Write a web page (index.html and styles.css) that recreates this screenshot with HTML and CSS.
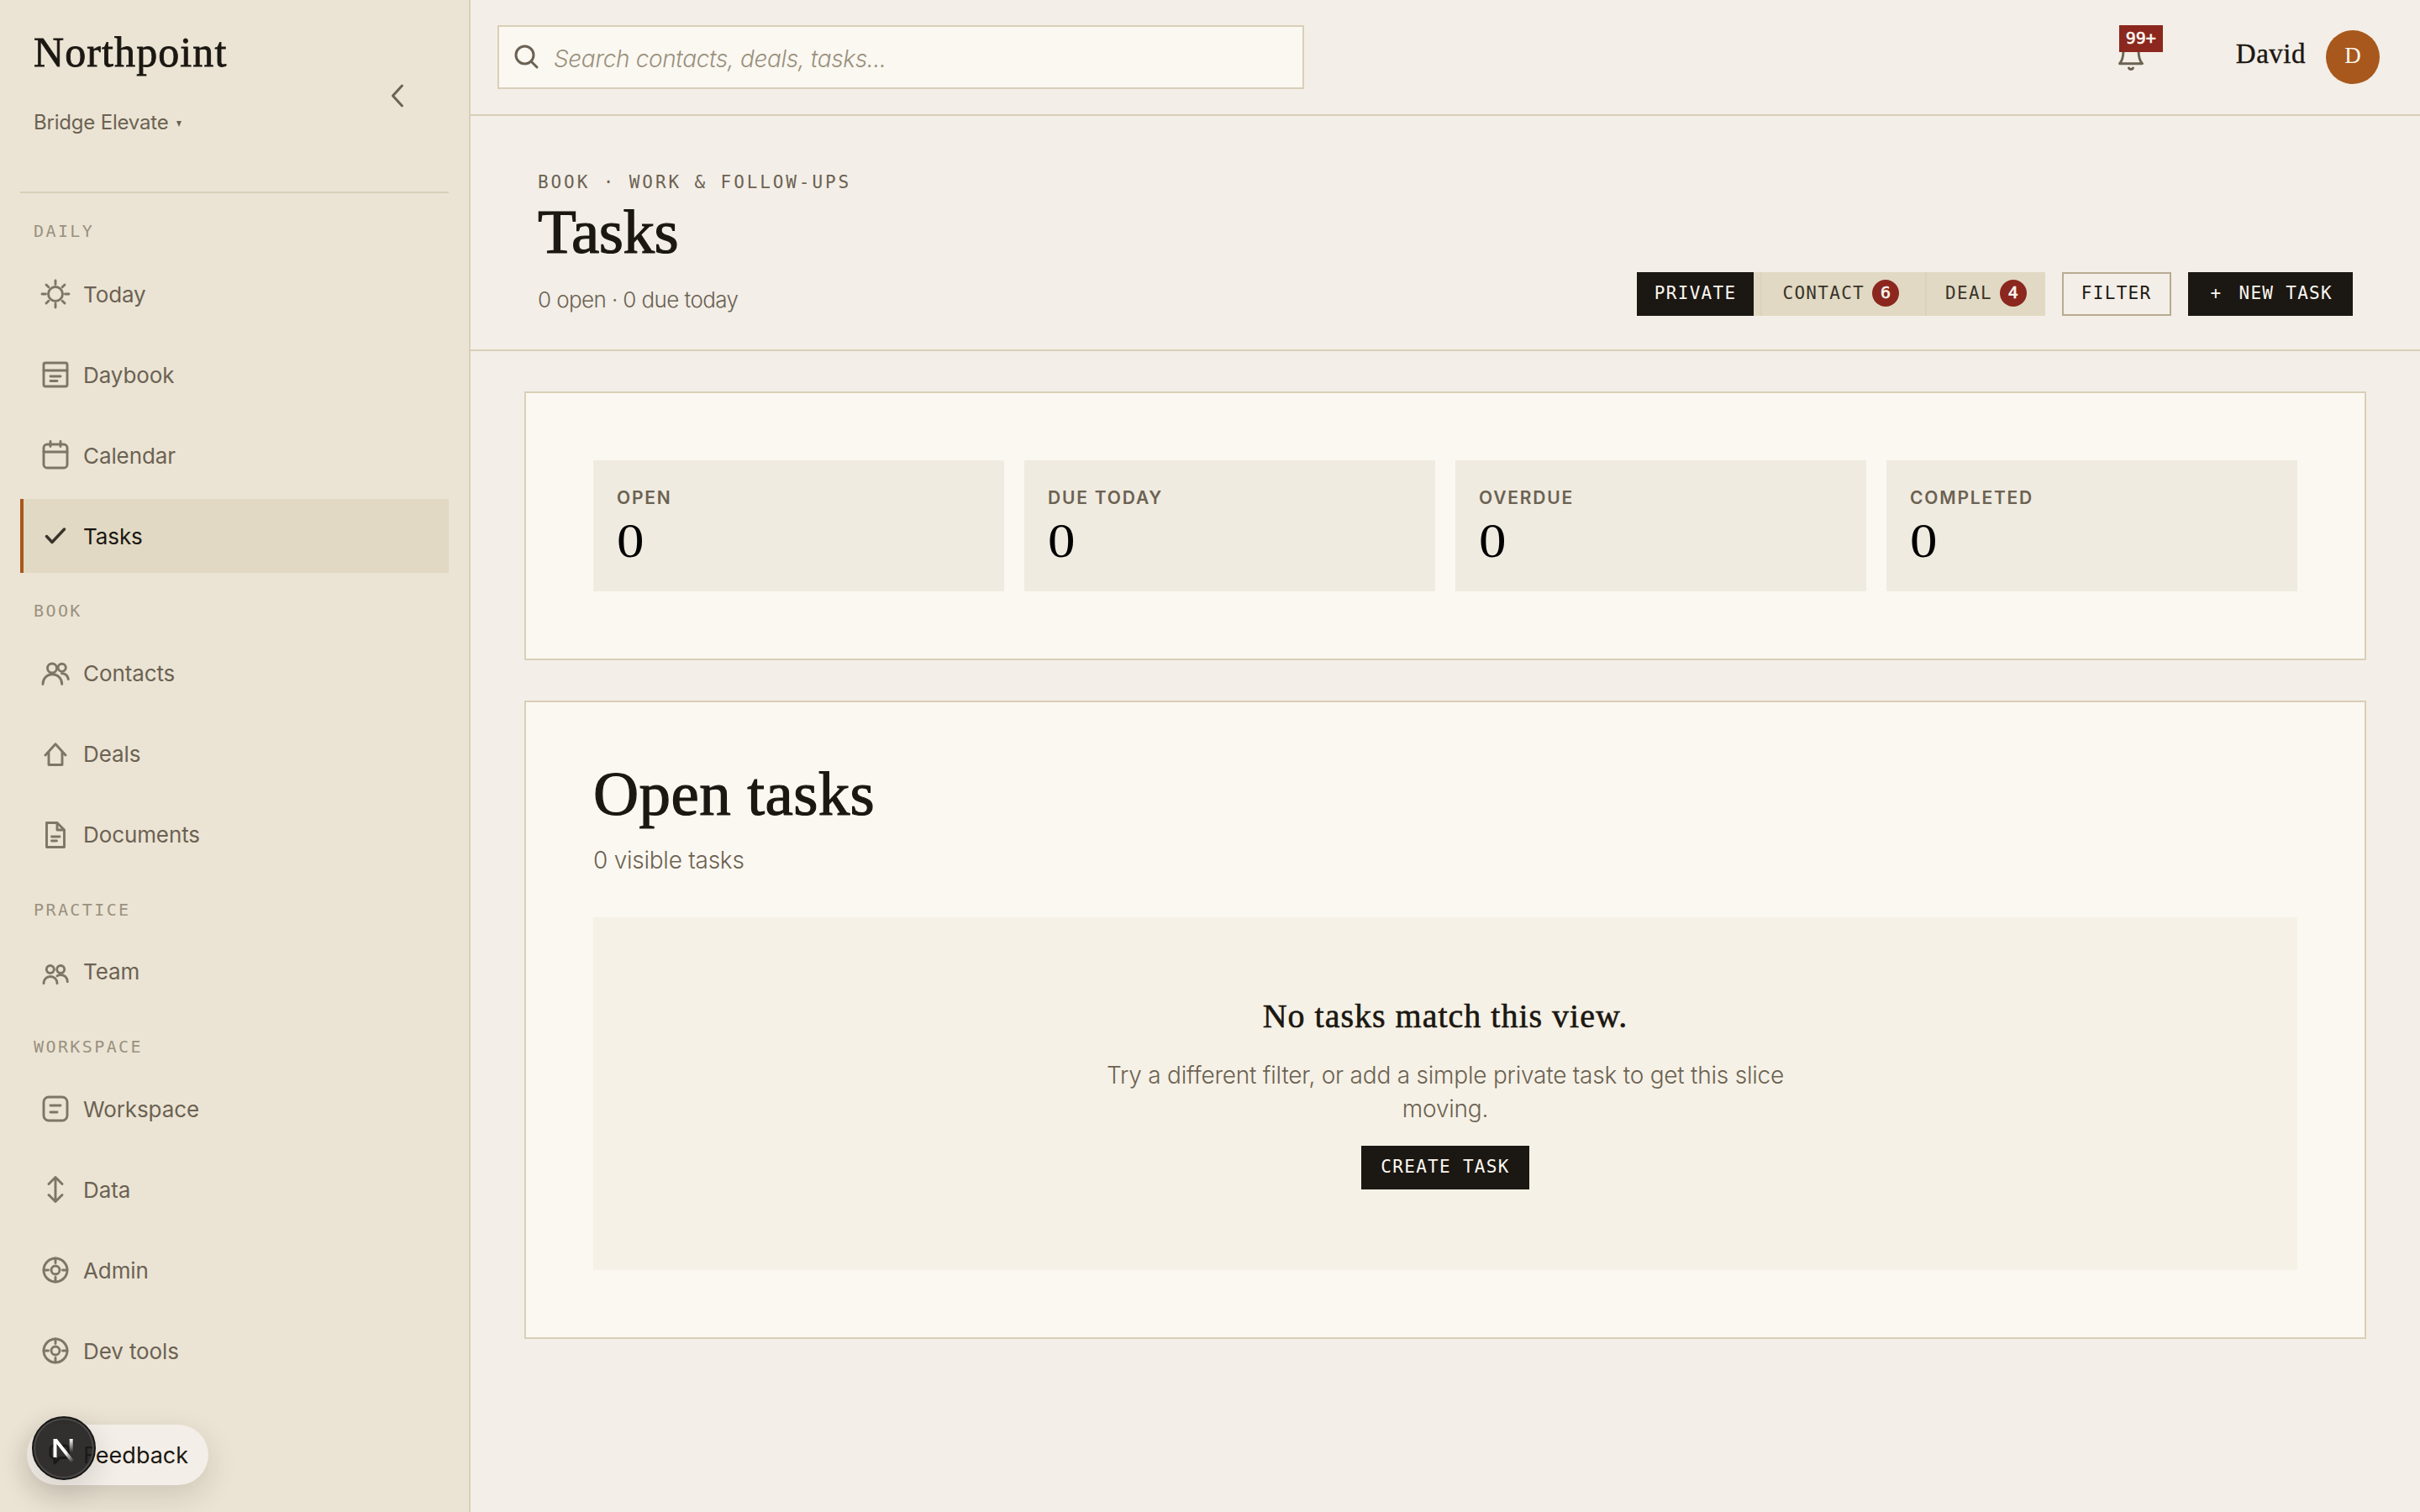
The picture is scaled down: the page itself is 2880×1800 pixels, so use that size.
FILE: index.html
```html
<!DOCTYPE html>
<html lang="en">
<head>
    <meta charset="utf-8">
    <title>Tasks | Northpoint</title>
    <meta name="viewport" content="width=device-width, initial-scale=1">
    <link rel="stylesheet" href="styles.css">
</head>
<body>
    <div class="app">
        <aside class="sidebar">
            <div class="sidebar-head">
                <div>
                    <div class="brand">Northpoint</div>
                    <div class="org">Bridge Elevate <span class="caret"></span></div>
                </div>
                <button class="collapse" aria-label="Collapse">
                    <svg viewBox="0 0 36 36"><path d="M23.5 6 12.5 18l11 12"/></svg>
                </button>
            </div>
            <nav>
                <div class="nav-label nav-label-first">Daily</div>
                <a class="nav-item">
                    <svg viewBox="0 0 36 36"><circle cx="18" cy="18" r="8.5"/><path d="M18 2v4.5M18 29.5V34M2 18h4.5M29.5 18H34M7 7l2.8 2.8M26.2 26.2 29 29M7 29l2.8-2.8M26.2 9.8 29 7"/></svg>
                    <span>Today</span>
                </a>
                <a class="nav-item">
                    <svg viewBox="0 0 36 36"><rect x="4" y="4" width="28" height="28" rx="2"/><path d="M4 13h28M12 20h12M12 25.5h8"/></svg>
                    <span>Daybook</span>
                </a>
                <a class="nav-item">
                    <svg viewBox="0 0 36 36"><rect x="4" y="5" width="28" height="28" rx="4"/><path d="M4 14h28M12 1.5v6M24 1.5v6"/></svg>
                    <span>Calendar</span>
                </a>
                <a class="nav-item active">
                    <svg viewBox="0 0 36 36"><path d="m7.5 18.5 6.5 7L28.5 10"/></svg>
                    <span>Tasks</span>
                </a>
                <div class="nav-label">Book</div>
                <a class="nav-item">
                    <svg viewBox="0 0 36 36"><circle cx="14" cy="11.5" r="5.5"/><circle cx="25.7" cy="10.8" r="4.6"/><path d="M3 30.5C3 23.5 8 18.7 14.3 18.7S25.7 23.5 25.7 30.5M25.5 17.7c4 0 7 2.5 7.8 6.8"/></svg>
                    <span>Contacts</span>
                </a>
                <a class="nav-item">
                    <svg viewBox="0 0 36 36"><path d="M6 19 18 5.7 30 19M10 15v15.5h16V15"/></svg>
                    <span>Deals</span>
                </a>
                <a class="nav-item">
                    <svg viewBox="0 0 36 36"><path d="M7.5 3.5H20l8.5 8.500v20.5h-21zM20 3.5V12h8.5M13.5 20H23M13.5 25h6"/></svg>
                    <span>Documents</span>
                </a>
                <div class="nav-label">Practice</div>
                <a class="nav-item">
                    <svg viewBox="0 0 36 36"><circle cx="11.8" cy="15" r="4.5"/><circle cx="24.2" cy="15" r="4.5"/><path d="M4 31.7c0-5 3.5-8.2 8-8.2s8 3.2 8 8.2M20 22.8c1-.8 2.5-1.3 4.3-1.3 4.5 0 8 3.5 8 8.2"/></svg>
                    <span>Team</span>
                </a>
                <div class="nav-label">Workspace</div>
                <a class="nav-item">
                    <svg viewBox="0 0 36 36"><rect x="4" y="4" width="28" height="28" rx="6"/><path d="M12 14h12M12 22h8"/></svg>
                    <span>Workspace</span>
                </a>
                <a class="nav-item">
                    <svg viewBox="0 0 36 36"><path d="M18 4v28M10 11.5l8-8 8 8M10 24.500l8 8 8-8"/></svg>
                    <span>Data</span>
                </a>
                <a class="nav-item">
                    <svg viewBox="0 0 36 36"><circle cx="18" cy="18" r="14"/><circle cx="18" cy="18" r="5"/><path d="M18 4v5.5M18 26.5V32M4 18h5.5M26.5 18H32"/></svg>
                    <span>Admin</span>
                </a>
                <a class="nav-item">
                    <svg viewBox="0 0 36 36"><circle cx="18" cy="18" r="14"/><circle cx="18" cy="18" r="5"/><path d="M18 4v5.5M18 26.5V32M4 18h5.5M26.5 18H32"/></svg>
                    <span>Dev tools</span>
                </a>
            </nav>
        </aside>

        <div class="main">
            <header class="topbar">
                <div class="search">
                    <svg viewBox="0 0 36 36"><circle cx="15.5" cy="15.5" r="10.5"/><path d="m23 23 7 7"/></svg>
                    <span>Search contacts, deals, tasks...</span>
                </div>
                <div class="topbar-right">
                    <div class="bell">
                        <svg viewBox="0 0 36 36"><path d="M4.5 25.7C8 22 9 17 9 10a9 9 0 0 1 18 0c0 7 1 12 4.5 15.7zM15.5 31c1 2 4 2 5 0"/></svg>
                        <span class="bell-badge">99+</span>
                    </div>
                    <div class="user">
                        <span class="user-name">David</span>
                        <span class="avatar">D</span>
                    </div>
                </div>
            </header>

            <section class="page-head">
                <div>
                    <div class="eyebrow">Book · Work &amp; Follow-ups</div>
                    <h1>Tasks</h1>
                    <p class="summary">0 open · 0 due today</p>
                </div>
                <div class="actions">
                    <div class="tabs">
                        <button class="tab tab-active">Private</button>
                        <button class="tab tab-contact">Contact <span class="count">6</span></button>
                        <button class="tab tab-deal">Deal <span class="count">4</span></button>
                    </div>
                    <button class="btn btn-outline">Filter</button>
                    <button class="btn"><span class="plus">+</span>New task</button>
                </div>
            </section>

            <div class="content">
                <section class="card stats">
                    <div class="stat"><span class="stat-label">Open</span><span class="stat-value">0</span></div>
                    <div class="stat"><span class="stat-label">Due today</span><span class="stat-value">0</span></div>
                    <div class="stat"><span class="stat-label">Overdue</span><span class="stat-value">0</span></div>
                    <div class="stat"><span class="stat-label">Completed</span><span class="stat-value">0</span></div>
                </section>

                <section class="card">
                    <h2>Open tasks</h2>
                    <p class="visible-count">0 visible tasks</p>
                    <div class="empty">
                        <h3>No tasks match this view.</h3>
                        <p>Try a different filter, or add a simple private task to get this slice<br>moving.</p>
                        <button class="btn btn-create">Create task</button>
                    </div>
                </section>
            </div>
        </div>
    </div>

    <button class="feedback">
        <svg viewBox="0 0 36 36"><path d="M16 7h13.5a4 4 0 0 1 4 4v6.5a4 4 0 0 1-4 4H23L17 28v-6.5h-1a4 4 0 0 1-4-4V11a4 4 0 0 1 4-4z"/></svg>
        <span>Feedback</span>
    </button>
    <div class="dev-badge">
        <svg viewBox="0 0 76 76">
            <defs>
                <linearGradient id="leg" x1="0" y1="27" x2="0" y2="43" gradientUnits="userSpaceOnUse">
                    <stop offset="0" stop-color="#fff"/>
                    <stop offset="1" stop-color="#fff" stop-opacity="0"/>
                </linearGradient>
                <linearGradient id="slash" x1="38" y1="41" x2="49" y2="54" gradientUnits="userSpaceOnUse">
                    <stop offset="0.2" stop-color="#fff"/>
                    <stop offset="1" stop-color="#fff" stop-opacity="0"/>
                </linearGradient>
            </defs>
            <path d="M27.5 27v22" stroke="#fff"/>
            <path d="M28 28 48.500 54" stroke="url(#slash)"/>
            <path d="M46.7 27v16" stroke="url(#leg)"/>
        </svg>
    </div>
</body>
</html>
```
FILE: styles.css
```css
:root {
    --ink: #1b1712;
    --muted: #6b6253;
    --faint: #9a917f;
    --paper: #f3eee7;
    --card: #fbf8f1;
    --sidebar: #ebe4d4;
    --sand: #e1d9c3;
    --line: #d9cfb8;
    --red: #8b271e;
    --rust: #a8581c;
    --serif: "Liberation Serif", "Times New Roman", serif;
    --sans: Inter, "Liberation Sans", sans-serif;
    --mono: "DejaVu Sans Mono", "Liberation Mono", monospace;
}
* {
    box-sizing: border-box;
}
body {
    margin: 0;
    background: var(--paper);
    color: var(--ink);
    font-family: var(--sans);
    font-size: 28px;
}
h1, h2, h3, p {
    margin: 0;
}
button {
    border: none;
    margin: 0;
    padding: 0;
    background: none;
    font-family: inherit;
}
svg {
    fill: none;
    stroke: currentColor;
    stroke-width: 2.9;
    stroke-linecap: round;
    stroke-linejoin: round;
    flex-shrink: 0;
}
.app {
    display: flex;
    height: 1800px;
    overflow: hidden;
}

/* sidebar */
.sidebar {
    width: 560px;
    flex-shrink: 0;
    padding: 0 24px;
    background: var(--sidebar);
    border-right: 2px solid var(--line);
}
.sidebar-head {
    display: flex;
    justify-content: space-between;
    height: 230px;
    padding: 32px 43px 0 16px;
    border-bottom: 2px solid var(--line);
}
.brand {
    font-family: var(--serif);
    font-size: 50px;
    line-height: 60px;
    letter-spacing: 1.1px;
    -webkit-text-stroke: 0.8px currentColor;
}
.org {
    display: flex;
    align-items: center;
    margin-top: 38px;
    color: var(--muted);
    font-size: 24px;
    line-height: 32px;
    letter-spacing: -0.2px;
}
.caret {
    margin: 2px 0 0 9px;
    border: 3.5px solid transparent;
    border-top: 7px solid var(--muted);
    border-bottom: 0;
}
.collapse {
    width: 36px;
    height: 36px;
    margin-top: 64px;
    color: var(--muted);
}
.collapse svg {
    width: 36px;
    height: 36px;
    stroke-width: 3;
}
.nav-label {
    height: 75.33px;
    padding: 33px 16px 0;
    color: var(--faint);
    font-family: var(--mono);
    font-size: 20px;
    line-height: 24px;
    letter-spacing: 2.4px;
    text-transform: uppercase;
}
.nav-label-first {
    height: 76.33px;
}
.nav-item {
    display: flex;
    align-items: center;
    gap: 15px;
    height: 88px;
    padding-left: 20px;
    border-left: 4px solid transparent;
    color: var(--muted);
    font-size: 26px;
    letter-spacing: -0.1px;
}
.nav-item + .nav-item {
    margin-top: 8px;
}
.nav-item svg {
    width: 36px;
    height: 36px;
    opacity: 0.85;
}
.nav-item.active {
    background: var(--sand);
    border-left-color: var(--rust);
    color: var(--ink);
}
.nav-item.active svg {
    stroke-width: 3.4;
}

/* top bar */
.main {
    flex: 1;
}
.topbar {
    display: flex;
    justify-content: space-between;
    align-items: center;
    height: 138px;
    padding: 0 48px 0 32px;
    border-bottom: 2px solid var(--line);
}
.search {
    display: flex;
    align-items: center;
    gap: 14px;
    width: 960px;
    height: 76px;
    padding: 0 15px;
    background: var(--card);
    border: 2px solid var(--line);
    color: var(--faint);
    font-size: 28px;
    font-style: italic;
    font-weight: 300;
    letter-spacing: -0.35px;
}
.search span {
    padding-top: 3px;
}
.search svg {
    width: 36px;
    height: 36px;
    color: var(--muted);
    stroke-width: 3;
}
.topbar-right {
    display: flex;
    align-items: center;
}
.bell {
    position: relative;
    width: 36px;
    height: 36px;
    margin-right: 107px;
    color: var(--muted);
}
.bell svg {
    width: 36px;
    height: 36px;
}
.bell-badge {
    position: absolute;
    left: 4px;
    top: -20px;
    width: 52px;
    height: 32px;
    background: var(--red);
    color: var(--card);
    font-family: var(--mono);
    font-size: 20px;
    line-height: 30px;
    text-align: center;
    -webkit-text-stroke: 0.6px currentColor;
}
.user {
    display: flex;
    align-items: center;
    gap: 24px;
}
.user-name {
    padding-bottom: 8px;
    font-family: var(--serif);
    font-size: 33px;
    letter-spacing: 0.5px;
    -webkit-text-stroke: 0.4px currentColor;
}
.avatar {
    width: 64px;
    height: 64px;
    border-radius: 50%;
    background: var(--rust);
    color: var(--card);
    font-family: var(--serif);
    font-size: 27px;
    line-height: 60px;
    text-align: center;
}

/* page heading */
.page-head {
    display: flex;
    justify-content: space-between;
    height: 280px;
    padding: 66px 80px 0;
    border-bottom: 2px solid var(--line);
}
.eyebrow {
    color: var(--muted);
    font-family: var(--mono);
    font-size: 21px;
    line-height: 26px;
    letter-spacing: 2.9px;
    text-transform: uppercase;
}
h1, h2 {
    font-family: var(--serif);
    font-size: 75px;
    font-weight: 400;
    line-height: 84px;
    letter-spacing: -0.5px;
    -webkit-text-stroke: 1.2px currentColor;
}
h1 {
    margin-top: 4px;
}
.summary {
    margin-top: 21px;
    color: var(--muted);
    font-size: 26px;
    line-height: 36px;
    font-weight: 300;
    letter-spacing: -0.6px;
}
.actions {
    display: flex;
    gap: 20px;
    height: 52px;
    margin-top: 120px;
}
.tabs {
    display: flex;
    background: var(--sand);
}
.tab, .btn {
    display: flex;
    align-items: center;
    height: 52px;
    font-family: var(--mono);
    font-size: 21px;
    letter-spacing: 1.3px;
    text-transform: uppercase;
}
.tab {
    padding: 0 21px 2px;
    color: #3a342a;
}
.tab-active {
    background: var(--ink);
    color: var(--card);
}
.tab-contact {
    margin-left: 8px;
    padding: 0 31px 2px 24px;
    border-left: 2px solid #ddd2bb;
}
.tab-deal {
    padding: 0 22px 2px;
    border-left: 2px solid #ddd2bb;
}
.count {
    width: 32px;
    height: 32px;
    margin-left: 9px;
    border-radius: 50%;
    background: var(--red);
    color: var(--card);
    font-size: 20px;
    line-height: 31px;
    letter-spacing: 0;
    text-align: center;
    -webkit-text-stroke: 0.6px currentColor;
}
.btn {
    padding: 0 24px 2px;
    background: var(--ink);
    color: var(--card);
}
.btn-outline {
    padding: 0 21px 2px;
    background: none;
    border: 2px solid #b8ab90;
    color: var(--ink);
}
.btn-create {
    padding: 0 23px 2px;
}
.plus {
    margin: 0 20px 0 3px;
}

/* cards */
.content {
    display: flex;
    flex-direction: column;
    gap: 48px;
    padding: 48px 64px;
}
.card {
    height: 760px;
    padding: 80px;
    background: var(--card);
    border: 2px solid var(--line);
}
.stats {
    display: grid;
    grid-template-columns: repeat(4, 1fr);
    gap: 24px;
    height: 320px;
}
.stat {
    display: flex;
    flex-direction: column;
    align-items: flex-start;
    padding: 31px 28px 0;
    background: #f0ebe0;
}
.stat-label {
    color: var(--muted);
    font-size: 21px;
    font-weight: 600;
    line-height: 28px;
    letter-spacing: 1.8px;
    text-transform: uppercase;
}
.stat-value {
    margin-top: 4px;
    color: #000;
    font-family: var(--serif);
    font-size: 58px;
    line-height: 66px;
    transform: scaleX(1.12);
    transform-origin: left;
}
.card h2 {
    margin-top: -13px;
    letter-spacing: 0.4px;
}
.visible-count {
    margin-top: 17px;
    color: var(--muted);
    font-size: 28px;
    font-weight: 300;
    line-height: 40px;
    letter-spacing: -0.25px;
}
.empty {
    display: flex;
    flex-direction: column;
    align-items: center;
    height: 420px;
    margin-top: 48px;
    padding-top: 94px;
    background: #f6f1e6;
    text-align: center;
}
.empty h3 {
    font-family: var(--serif);
    font-size: 40px;
    font-weight: 400;
    line-height: 48px;
    letter-spacing: 1px;
    -webkit-text-stroke: 0.6px currentColor;
}
.empty p {
    margin: 26px 0 24px;
    color: var(--muted);
    font-size: 28px;
    font-weight: 300;
    line-height: 40px;
    letter-spacing: -0.22px;
}

/* floating controls */
.feedback {
    position: absolute;
    left: 32px;
    top: 1696px;
    display: flex;
    align-items: center;
    gap: 15px;
    width: 216px;
    height: 72px;
    padding-left: 16px;
    border-radius: 36px;
    background: var(--paper);
    box-shadow: 0 12px 36px rgba(27, 23, 18, 0.14);
    color: var(--ink);
    font-size: 27px;
}
.feedback svg {
    width: 36px;
    height: 36px;
}
.dev-badge {
    position: absolute;
    left: 38px;
    top: 1686px;
    width: 76px;
    height: 76px;
    border: 2px solid #171717;
    border-radius: 50%;
    background: rgba(28, 27, 26, 0.9);
    box-shadow: inset 0 0 0 2px #4b4a49, 0 12px 36px rgba(27, 23, 18, 0.14);
}
.dev-badge svg {
    display: block;
    width: 76px;
    height: 76px;
    margin: -2px;
    stroke-width: 4;
    stroke-linecap: butt;
    stroke-linejoin: miter;
}
```
